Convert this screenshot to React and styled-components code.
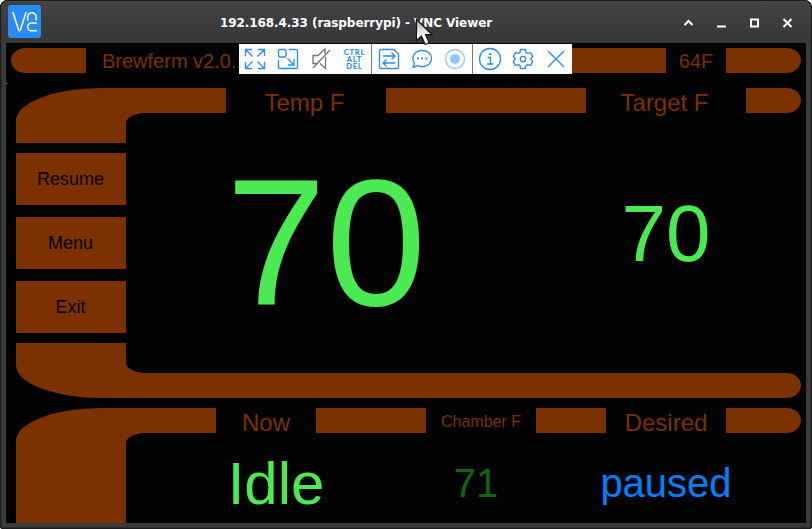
import React from 'react';
import styled, { createGlobalStyle } from 'styled-components';

const BROWN = '#7b3100';
const BLACK = '#030303';
const GREEN = '#4bea52';
const BLUE = '#2b8df5';

const GlobalStyle = createGlobalStyle`
  * { box-sizing: border-box; }
  body { margin: 0; background: #fff; overflow: hidden; }
`;

const Window = styled.main`
  position: relative;
  width: 812px;
  height: 529px;
  padding: 0 6px 6px;
  display: flex;
  flex-direction: column;
  overflow: hidden;
  border-radius: 8px 8px 3px 3px;
  background: #3b3b3b;
  box-shadow: inset 0 0 0 1px #1c1c1c, inset 0 0 0 2px #2d2d2e;
  font-family: 'Liberation Sans', Arial, sans-serif;
`;

const TitleBar = styled.header`
  flex: 0 0 43px;
  margin: 0 -6px;
  padding: 0 19px 0 8px;
  display: grid;
  grid-template-columns: 96px 1fr 110px;
  align-items: center;
  border-radius: 8px 8px 0 0;
  background: linear-gradient(#434346, #37373a);
  box-shadow: inset 0 1px 0 #1b1b1b, inset 1px 0 0 #1c1c1c, inset -1px 0 0 #1c1c1c,
    inset 0 2px 0 #4a4a4d;
`;

const Logo = styled.svg`
  display: block;
  width: 33px;
  height: 33px;
`;

const Title = styled.h1`
  margin: 0;
  padding: 2px 75px 0 0;
  text-align: center;
  font: bold 12px/16px 'DejaVu Sans', sans-serif;
  letter-spacing: -0.07px;
  color: #fff;
  white-space: nowrap;
`;

const WindowControls = styled.svg`
  display: block;
  width: 110px;
  height: 12px;
`;

const Screen = styled.section`
  height: 480px;
  padding-top: 5px;
  display: flex;
  flex-direction: column;
  overflow: hidden;
  background: ${BLACK};
`;

const Strip = styled.div`
  display: flex;
  height: 25px;
  padding-right: 5px;
  padding-left: ${p => p.$left || 0}px;
`;

const Bar = styled.div`
  flex: ${p => (p.$w ? `0 0 ${p.$w}px` : '1')};
  background: ${BROWN};
  border-radius: ${p =>
    p.$cap === 'left' ? '14px 0 0 14px / 12.5px 0 0 12.5px'
    : p.$cap === 'right' ? '0 14px 14px 0 / 0 12.5px 12.5px 0' : '0'};
`;

const Label = styled.div`
  flex: 0 0 ${p => p.$w}px;
  padding-left: ${p => p.$pad || 0}px;
  padding-right: ${p => p.$end || 0}px;
  text-align: ${p => (p.$pad ? 'left' : 'center')};
  font-size: ${p => p.$size}px;
  line-height: ${p => p.$line}px;
  color: ${BROWN};
  white-space: nowrap;
`;

const Frame = styled.div`
  display: flex;
  height: ${p => p.$h}px;
  margin-top: ${p => p.$gap}px;
  padding-left: 10px;
`;

const Rail = styled.nav`
  flex: 0 0 110px;
  display: flex;
  flex-direction: column;
`;

const RailEnd = styled.div`
  flex: 0 0 ${p => p.$h}px;
  background: ${BROWN};
  border-radius: ${p => (p.$down ? '0 0 0 85px / 0 0 0 33px' : '85px 0 0 0 / 33px 0 0 0')};
`;

const RailButton = styled.button`
  height: 52px;
  margin: ${p => (p.$first ? 10 : 12)}px 0 0;
  padding: 0 1px 0 0;
  border: 0;
  background: ${BROWN};
  color: #080300;
  font: 18px/52px 'Liberation Sans', Arial, sans-serif;
  text-align: center;
`;

const Spacer = styled.div`
  flex: 1;
`;

const Content = styled.div`
  flex: 1;
  min-width: 0;
  display: flex;
  flex-direction: column;
`;

const Corner = styled.div`
  flex: 0 0 10px;
  width: 20px;
  background: radial-gradient(
    ellipse 20px 10px at 100% ${p => (p.$down ? '0%' : '100%')},
    transparent 97%, ${BROWN} 102%
  );
`;

const Readings = styled.div`
  flex: 1;
  display: grid;
  grid-template-columns: ${p => p.$cols};
`;

const Value = styled.div`
  text-align: center;
  font-size: ${p => p.$size}px;
  line-height: ${p => p.$line}px;
  color: ${p => p.$color || GREEN};
  white-space: nowrap;
`;

const Toolbar = styled.div`
  position: absolute;
  left: 239px;
  top: 44px;
  height: 30px;
  display: flex;
  background: #fff;
`;

const ToolGroup = styled.div`
  display: flex;
  width: ${p => p.$w}px;
  padding-left: ${p => p.$pad}px;
  gap: 9px;
  align-items: center;
  & + & { border-left: 1px solid #777; }
`;

const ToolIcon = styled.svg`
  flex: 0 0 24px;
  height: 24px;
  fill: none;
  stroke: ${p => p.$stroke || BLUE};
  stroke-width: 1.35;
`;

const KeyText = styled.div`
  flex: 0 0 24px;
  font: 900 7.5px/7px 'Lato', sans-serif;
  text-align: center;
  color: ${BLUE};
`;

const Key = styled.div`
  letter-spacing: ${p => p.$track}px;
  margin-right: -${p => p.$track}px;
`;

const Pointer = styled.svg`
  position: absolute;
  left: 414px;
  top: 15px;
  width: 22px;
  height: 31px;
`;

const Speck = styled.i`
  position: absolute;
  left: 6px;
  top: 83px;
  width: 1px;
  height: 1px;
  background: #57b957;
`;

export default function App() {
  return (
    <>
      <GlobalStyle />
      <Window>
        <TitleBar>
          <Logo viewBox="0 0 33 33">
            <rect width="33" height="33" rx="3" fill="#298df5" />
            <g fill="none" stroke="#fff" strokeWidth="1.5" strokeLinecap="round" strokeLinejoin="round">
              <path d="M5 7.5 10.5 24.5Q11.5 27 12.5 24.5L18 7.5" />
              <path d="M19.7 15V12a4 4 0 0 1 8.4 0v3M28.3 18H23.5a3.9 3.9 0 0 0 0 7.8h4.8" />
            </g>
          </Logo>
          <Title>192.168.4.33 (raspberrypi) - VNC Viewer</Title>
          <WindowControls viewBox="0 0 110 12" fill="none" stroke="#fff" strokeWidth="2">
            <path d="M1.5 9l4-4 4 4" />
            <path d="M34 10.5h9" />
            <path d="M68 3.5h7v7h-7z" />
            <path d="M100.5 3l8 8M108.5 3l-8 8" />
          </WindowControls>
        </TitleBar>

        <Screen>
          <Strip $left={5}>
            <Bar $w={75} $cap="left" />
            <Label $w={160} $size={20} $line={27} $pad={16}>Brewferm v2.0.1</Label>
            <Bar />
            <Label $w={60} $size={20} $line={27}>64F</Label>
            <Bar $w={75} $cap="right" />
          </Strip>

          <Frame $h={310} $gap={15}>
            <Rail>
              <RailEnd $h={55} />
              <RailButton $first>Resume</RailButton>
              <RailButton>Menu</RailButton>
              <RailButton>Exit</RailButton>
              <Spacer />
              <RailEnd $h={55} $down />
            </Rail>
            <Content>
              <Strip>
                <Bar $w={100} />
                <Label $w={160} $size={24} $line={30} $end={3}>Temp F</Label>
                <Bar $w={200} />
                <Label $w={160} $size={24} $line={30} $end={3}>Target F</Label>
                <Bar $cap="right" />
              </Strip>
              <Corner />
              <Readings $cols="400px 280px">
                <Value $size={180} $line={240}>70</Value>
                <Value $size={80} $line={222}>70</Value>
              </Readings>
              <Corner $down />
              <Strip><Bar $cap="right" /></Strip>
            </Content>
          </Frame>

          <Frame $h={115} $gap={10}>
            <Rail><RailEnd $h={115} /></Rail>
            <Content>
              <Strip>
                <Bar $w={90} />
                <Label $w={100} $size={24} $line={30}>Now</Label>
                <Bar $w={110} />
                <Label $w={110} $size={16} $line={28}>Chamber F</Label>
                <Bar $w={70} />
                <Label $w={120} $size={24} $line={30}>Desired</Label>
                <Bar $cap="right" />
              </Strip>
              <Corner />
              <Readings $cols="300px 100px 280px">
                <Value $size={60} $line={82}>Idle</Value>
                <Value $size={40} $line={80} $color="#0c670d">71</Value>
                <Value $size={40} $line={80} $color="#0080ff">paused</Value>
              </Readings>
            </Content>
          </Frame>
        </Screen>

        <Toolbar>
          <ToolGroup $w={132} $pad={4}>
            <ToolIcon viewBox="0 0 24 24">
              <path d="M2.5 9V2.5H9M15 2.5h6.5V9M21.5 15v6.5H15M9 21.5H2.5V15M3 3l6.5 6.5M21 3l-6.5 6.5M21 21l-6.5-6.5M3 21l6.5-6.5" />
            </ToolIcon>
            <ToolIcon viewBox="0 0 24 24">
              <rect x="2.5" y="2.5" width="7.5" height="7.5" rx="1.5" />
              <path d="M13 2.5h7a1.5 1.5 0 0 1 1.5 1.5v16a1.5 1.5 0 0 1-1.5 1.5H4A1.5 1.5 0 0 1 2.5 20v-7M11.5 11.5 18 18M18 12v6h-6" />
            </ToolIcon>
            <ToolIcon viewBox="0 0 24 24" $stroke="#777">
              <path d="M9 16.5H4v-8h5l7-6.5v5M16.5 10v11.5l-5.5-5M21 3 4 21" />
            </ToolIcon>
            <KeyText>
              <Key $track={0.8}>CTRL</Key>
              <Key $track={0.8}>ALT</Key>
              <Key $track={0.8}>DEL</Key>
            </KeyText>
          </ToolGroup>
          <ToolGroup $w={101} $pad={5}>
            <ToolIcon viewBox="0 0 24 24">
              <path d="M4 2.5h13l4.5 4.5v13a1.5 1.5 0 0 1-1.5 1.5H4a1.5 1.5 0 0 1-1.5-1.5V4a1.5 1.5 0 0 1 1.5-1.5zM6 9h12M14.5 5.5 18 9l-3.5 3.5M18 16H6M9.5 12.5 6 16l3.5 3.5" />
            </ToolIcon>
            <ToolIcon viewBox="0 0 24 24">
              <path strokeLinejoin="round" d="M4.5 16.5C.8 11 4 3.5 12.2 3.5c5.5 0 9.3 3.3 9.3 8s-3.8 8.2-9.3 8.2c-1.8 0-3-.4-4.3-1L3 20.5z" />
              <path d="M7 11.5h2M11.2 11.5h2M15.4 11.5h2" strokeWidth="2" />
            </ToolIcon>
            <ToolIcon viewBox="0 0 24 24" $stroke="#94c5fa">
              <circle cx="12" cy="12" r="9.5" />
              <circle cx="12" cy="12" r="5" fill="#94c5fa" stroke="none" />
            </ToolIcon>
          </ToolGroup>
          <ToolGroup $w={100} $pad={5}>
            <ToolIcon viewBox="0 0 24 24">
              <circle cx="12" cy="12" r="10.5" />
              <path d="M9.5 10.5h3V17M9 17h6.5" />
              <path d="M11.2 7h2" strokeWidth="2" />
            </ToolIcon>
            <ToolIcon viewBox="0 0 24 24">
              <path strokeLinejoin="round" d="M9.7 2.5h4.6l.8 3 1.5.9 3-.8L21.7 9.5l-2 2.5 2 2.5-2.1 3.9-3-.8-1.5.9-.8 3H9.7l-.8-3-1.5-.9-3 .8-2.1-3.9 2-2.5-2-2.5 2.1-3.9 3 .8 1.5-.9z" />
              <circle cx="12" cy="12" r="2.7" />
            </ToolIcon>
            <ToolIcon viewBox="0 0 24 24"><path d="M4 4l16 16M20 4 4 20" /></ToolIcon>
          </ToolGroup>
        </Toolbar>
        <Speck />
        <Pointer viewBox="0 0 22 31">
          <defs>
            <linearGradient id="pointer" x2="0" y2="1">
              <stop stopColor="#aaa" />
              <stop offset="0.7" stopColor="#fff" />
            </linearGradient>
          </defs>
          <path d="M2.5 4.5v21l5-4.5 3.7 8.5 4-1.8-3.7-8h6.7z" fill="url(#pointer)" stroke="#161616" strokeWidth="1.2" />
        </Pointer>
      </Window>
    </>
  );
}
